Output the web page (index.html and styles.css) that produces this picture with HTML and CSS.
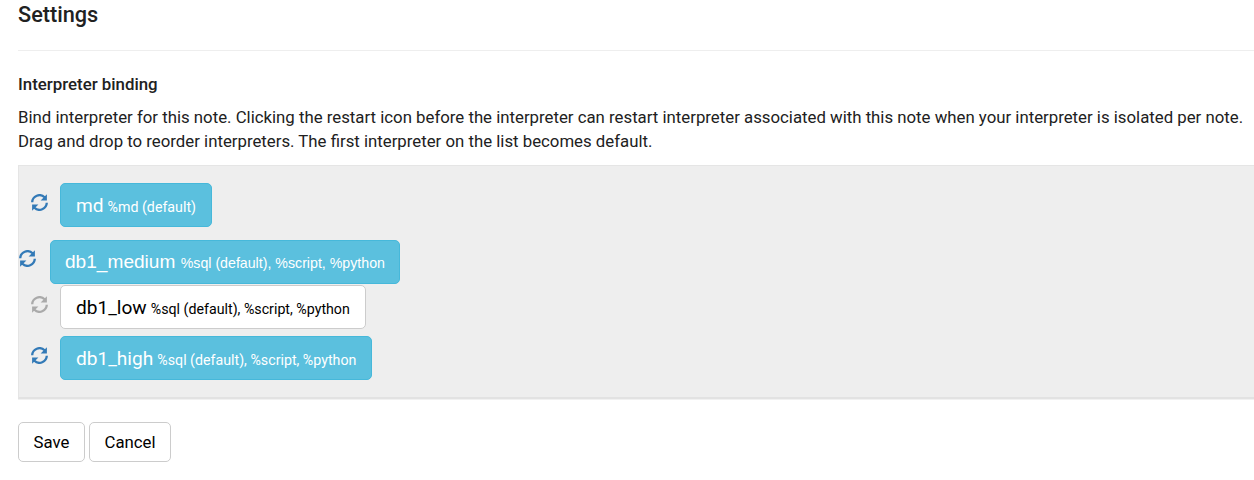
FILE: index.html
```html
<!DOCTYPE html>
<html lang="en">
<head>
<meta charset="utf-8">
<title>Settings</title>
<link rel="stylesheet" href="styles.css">
</head>
<body>
<svg width="0" height="0" class="defs"><symbol id="refresh" viewBox="0 0 17 17"><path d="M1.200 8.200A7.300 7.300 0 0 1 13.600 3.300M15.800 8.800A7.300 7.300 0 0 1 3.400 13.700" fill="none" stroke="currentColor" stroke-width="2.3"/><path d="M15.900.2V6.500H9.600L12.600 3.600ZM1.100 16.800V10.500H7.400L4.400 13.400Z" fill="currentColor"/></symbol></svg>
<main class="settings">
  <h1 class="title">Settings</h1>
  <hr class="divider">
  <h2 class="subtitle">Interpreter binding</h2>
  <p class="intro">Bind interpreter for this note. Clicking the restart icon before the interpreter can restart interpreter associated with this note when your interpreter is isolated per note.<br>Drag and drop to reorder interpreters. The first interpreter on the list becomes default.</p>
  <section class="panel">
    <div class="row first"><svg class="icon"><use href="#refresh"/></svg><button class="item on">md <small>%md (default)</small></button></div>
    <div class="row dragged"><svg class="icon"><use href="#refresh"/></svg><button class="item on">db1_medium <small>%sql (default), %script, %python</small></button></div>
    <div class="row"><svg class="icon off"><use href="#refresh"/></svg><button class="item">db1_low <small>%sql (default), %script, %python</small></button></div>
    <div class="row last"><svg class="icon"><use href="#refresh"/></svg><button class="item on">db1_high <small>%sql (default), %script, %python</small></button></div>
  </section>
  <div class="actions"><button class="btn save">Save</button><button class="btn cancel">Cancel</button></div>
</main>
</body>
</html>
```
FILE: styles.css
```css
* { box-sizing: border-box; }
body { margin: 0; background: #fff; color: #212121; font: 16.8px/24px Roboto, sans-serif; overflow: hidden; }
.defs { display: block; }
.settings { padding-left: 18px; height: 480px; }
.title { margin: 0; padding-top: 3px; height: 50px; font-size: 21.7px; font-weight: 500; line-height: 24px; }
.divider { margin: 0; border: 0; height: 1px; background: #eee; }
.subtitle { margin: 0; padding-top: 21px; height: 54px; font-size: 16.85px; font-weight: 500; line-height: 24px; }
.intro { margin: 0; height: 60px; white-space: nowrap; }
.panel { height: 234px; padding: 17px 0 0 12px; background: #eee; border: 1px solid #e5e5e5; border-right: 0; border-bottom: 2px solid #e2e2e2; box-shadow: 0 1px 0 #f1f1f1; }
.row { display: flex; align-items: flex-start; height: 44px; }
.first { margin-bottom: 13px; }
.dragged { margin: 0 0 1px -12px; }
.last { margin-top: 7px; }
.icon { width: 17px; height: 17px; margin: 11px 12px 0 0; color: #337ab7; flex: none; }
.dragged .icon { margin-top: 10px; margin-right: 14px; }
.icon.off { color: #aaa; }
.item { height: 44px; padding: 1px 15px 0; border: 1px solid #ccc; border-radius: 5px; background: #fff; color: #000; font: 19.1px/42px Roboto, sans-serif; white-space: nowrap; }
.item.on { background: #5bc0de; border-color: #46b8da; color: #fff; }
.item small { margin-left: -0.7px; font-size: 14.23px; }
.dragged .item { padding: 0 14px; font-family: "Liberation Sans", Arial, sans-serif; }
.dragged .item small { margin-left: 0; font-size: 14.2px; }
.actions { display: flex; gap: 4px; margin-top: 23px; }
.btn { height: 40px; padding: 0; border: 1px solid #ccc; border-radius: 5px; background: #fff; color: #000; font: 16.8px/38px Roboto, sans-serif; }
.save { width: 67px; }
.cancel { width: 82px; }
```
